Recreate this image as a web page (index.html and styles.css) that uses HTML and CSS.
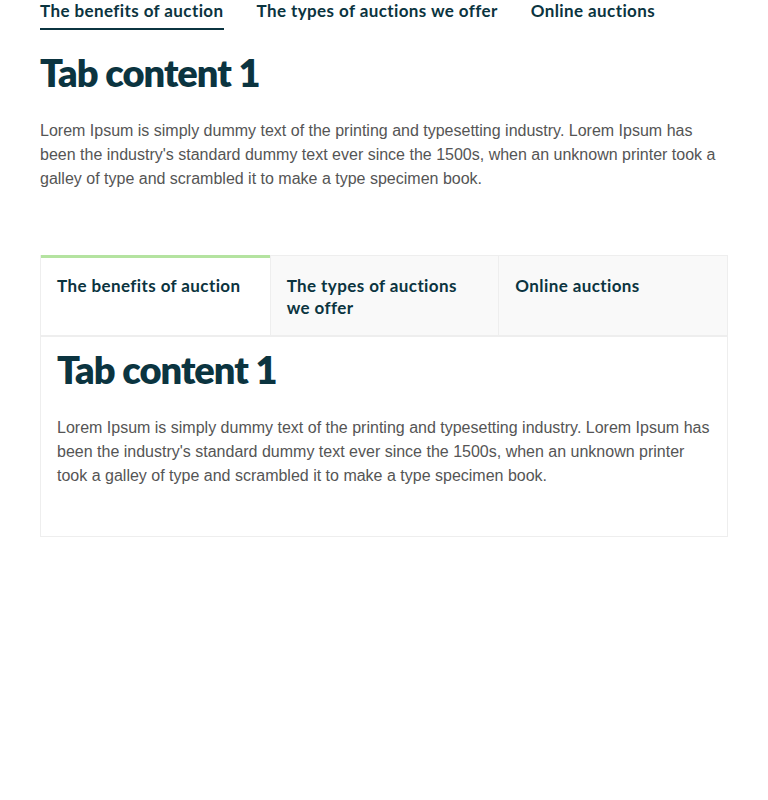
FILE: index.html
```html
<!DOCTYPE html>
<html lang="en">
<head>
<meta charset="utf-8">
<title>Tabs</title>
<link rel="stylesheet" href="styles.css">
</head>
<body>
<div class="page">
  <section class="plain-tabs">
    <nav class="plain-nav">
      <span class="plain-tab active">The benefits of auction</span>
      <span class="plain-tab">The types of auctions we offer</span>
      <span class="plain-tab">Online auctions</span>
    </nav>
    <h2 class="title">Tab content 1</h2>
    <p class="copy">Lorem Ipsum is simply dummy text of the printing and typesetting industry. Lorem Ipsum has been the industry's standard dummy text ever since the 1500s, when an unknown printer took a galley of type and scrambled it to make a type specimen book.</p>
  </section>

  <section class="box-tabs">
    <div class="box-nav">
      <div class="box-tab active">The benefits of auction</div>
      <div class="box-tab">The types of auctions we offer</div>
      <div class="box-tab">Online auctions</div>
    </div>
    <div class="box-panel">
      <h2 class="title">Tab content 1</h2>
      <p class="copy">Lorem Ipsum is simply dummy text of the printing and typesetting industry. Lorem Ipsum has been the industry's standard dummy text ever since the 1500s, when an unknown printer took a galley of type and scrambled it to make a type specimen book.</p>
    </div>
  </section>
</div>
</body>
</html>
```

FILE: styles.css
```css
* { box-sizing: border-box; }
html, body { margin: 0; padding: 0; background: #fff; }
body { font-family: "Liberation Sans", Arial, sans-serif; }
.page { padding: 0 40px; }

.plain-nav {
  display: flex;
  gap: 33px;
}
.plain-tab {
  font-family: Lato, "Noto Sans", sans-serif;
  font-weight: 700;
  font-size: 17px;
  line-height: 22px;
  letter-spacing: 0.4px;
  color: #0b3440;
  padding-bottom: 6px;
  border-bottom: 2px solid transparent;
}
.plain-tab.active { border-bottom-color: #0b3440; }

.title {
  font-family: Lato, "Noto Sans", sans-serif;
  font-weight: 800;
  font-size: 38px;
  line-height: 44px;
  letter-spacing: -1px;
  color: #0b3440;
  margin: 0;
}
.plain-tabs .title { margin-top: 20px; }

.copy {
  font-size: 16px;
  line-height: 24px;
  color: #555;
  margin: 0;
}
.plain-tabs .copy { margin-top: 25px; }

.box-tabs {
  margin-top: 64px;
  border: 1px solid #eee;
  border-top: none;
}
.box-nav {
  display: grid;
  grid-template-columns: repeat(3, 1fr);
  border-bottom: 2px solid #eee;
}
.box-tab {
  font-family: Lato, "Noto Sans", sans-serif;
  font-weight: 700;
  font-size: 17px;
  line-height: 22px;
  letter-spacing: 0.4px;
  color: #0b3440;
  background: #f9f9f9;
  padding: 19px 16px 16px 16px;
  min-height: 80px;
  border-top: 1px solid #eee;
  border-left: 1px solid #eee;
}
.box-tab:first-child { border-left: none; }
.box-tab.active {
  background: #fff;
  border-top: 3px solid #b4e3a0;
  padding-top: 17px;
}
.box-panel {
  padding: 10px 16px 48px 16px;
}
.box-panel .copy { margin-top: 25px; }
```
